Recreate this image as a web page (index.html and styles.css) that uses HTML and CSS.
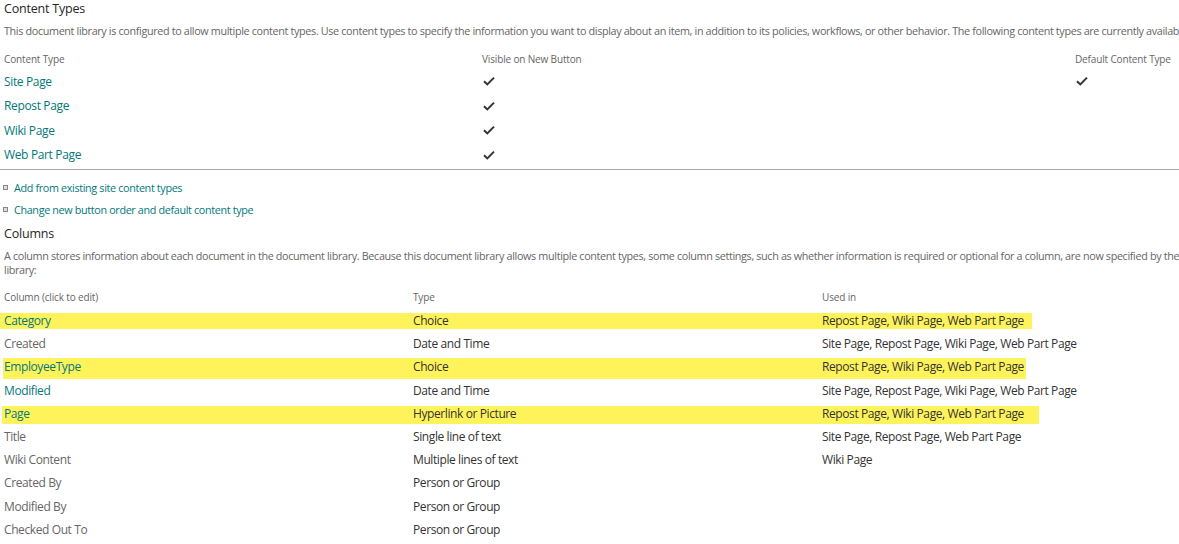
FILE: index.html
```html
<!DOCTYPE html>
<html lang="en">
<head>
    <meta charset="UTF-8">
    <title>Library Settings</title>
    <link rel="stylesheet" href="styles.css">
</head>
<body>
    <div class="page">
        <!-- Content types -->
        <h3 class="section-title">Content Types</h3>
        <p class="section-desc">This document library is configured to allow multiple content types. Use content types to specify the information you want to display about an item, in addition to its policies, workflows, or other behavior. The following content types are currently available in this library:</p>

        <div class="ct-table">
            <div class="ct-row ct-head">
                <span>Content Type</span>
                <span>Visible on New Button</span>
                <span>Default Content Type</span>
            </div>
            <div class="ct-row">
                <a href="#">Site Page</a>
                <span class="check"><svg viewBox="0 0 12 10" width="12" height="10"><path d="M1 5.2 L4.3 8.4 L11 1.6" fill="none" stroke="#333" stroke-width="2"/></svg></span>
                <span class="check"><svg viewBox="0 0 12 10" width="12" height="10"><path d="M1 5.2 L4.3 8.4 L11 1.6" fill="none" stroke="#333" stroke-width="2"/></svg></span>
            </div>
            <div class="ct-row">
                <a href="#">Repost Page</a>
                <span class="check"><svg viewBox="0 0 12 10" width="12" height="10"><path d="M1 5.2 L4.3 8.4 L11 1.6" fill="none" stroke="#333" stroke-width="2"/></svg></span>
                <span></span>
            </div>
            <div class="ct-row">
                <a href="#">Wiki Page</a>
                <span class="check"><svg viewBox="0 0 12 10" width="12" height="10"><path d="M1 5.2 L4.3 8.4 L11 1.6" fill="none" stroke="#333" stroke-width="2"/></svg></span>
                <span></span>
            </div>
            <div class="ct-row">
                <a href="#">Web Part Page</a>
                <span class="check"><svg viewBox="0 0 12 10" width="12" height="10"><path d="M1 5.2 L4.3 8.4 L11 1.6" fill="none" stroke="#333" stroke-width="2"/></svg></span>
                <span></span>
            </div>
        </div>

        <ul class="actions">
            <li><a href="#">Add from existing site content types</a></li>
            <li><a href="#">Change new button order and default content type</a></li>
        </ul>

        <!-- Columns -->
        <h3 class="section-title">Columns</h3>
        <p class="section-desc wrap">A column stores information about each document in the document library. Because this document library allows multiple content types, some column settings, such as whether information is required or optional for a column, are now specified by the content type of the item. The following columns are currently available in this document library:</p>

        <div class="col-table">
            <div class="col-row col-head">
                <span>Column (click to edit)</span>
                <span>Type</span>
                <span>Used in</span>
            </div>
            <div class="col-row mark mark-1">
                <a href="#">Category</a>
                <span>Choice</span>
                <span>Repost Page, Wiki Page, Web Part Page</span>
            </div>
            <div class="col-row">
                <a href="#" class="muted">Created</a>
                <span>Date and Time</span>
                <span>Site Page, Repost Page, Wiki Page, Web Part Page</span>
            </div>
            <div class="col-row mark mark-2">
                <a href="#">EmployeeType</a>
                <span>Choice</span>
                <span>Repost Page, Wiki Page, Web Part Page</span>
            </div>
            <div class="col-row">
                <a href="#">Modified</a>
                <span>Date and Time</span>
                <span>Site Page, Repost Page, Wiki Page, Web Part Page</span>
            </div>
            <div class="col-row mark mark-3">
                <a href="#">Page</a>
                <span>Hyperlink or Picture</span>
                <span>Repost Page, Wiki Page, Web Part Page</span>
            </div>
            <div class="col-row">
                <a href="#" class="muted">Title</a>
                <span>Single line of text</span>
                <span>Site Page, Repost Page, Web Part Page</span>
            </div>
            <div class="col-row">
                <a href="#" class="muted">Wiki Content</a>
                <span>Multiple lines of text</span>
                <span>Wiki Page</span>
            </div>
            <div class="col-row">
                <a href="#" class="muted">Created By</a>
                <span>Person or Group</span>
                <span></span>
            </div>
            <div class="col-row">
                <a href="#" class="muted">Modified By</a>
                <span>Person or Group</span>
                <span></span>
            </div>
            <div class="col-row">
                <a href="#" class="muted">Checked Out To</a>
                <span>Person or Group</span>
                <span></span>
            </div>
        </div>
    </div>
</body>
</html>
```

FILE: styles.css
```css
html, body {
    margin: 0;
    padding: 0;
    background: #fff;
    overflow: hidden;
}
body {
    font-family: "Open Sans", "Noto Sans", sans-serif;
    color: #333;
}
.page {
    width: 1800px;
    padding: 0 0 0 4px;
}
a {
    color: #03787c;
    text-decoration: none;
}
a.muted {
    color: #666;
}
.section-title {
    margin: 0;
    font-size: 12.5px;
    font-weight: normal;
    line-height: 18px;
    letter-spacing: -0.2px;
    color: #262626;
}
.section-desc {
    margin: 6px 0 0;
    font-size: 10.8px;
    line-height: 14px;
    letter-spacing: -0.35px;
    color: #666;
    white-space: nowrap;
}
.section-desc.wrap {
    width: 1615px;
    white-space: normal;
    margin-top: 6px;
}
.ct-table {
    margin-top: 12px;
    margin-left: -4px;
    padding-left: 4px;
    border-bottom: 1px solid #a6a6a6;
    padding-bottom: 2px;
}
.ct-row {
    display: grid;
    grid-template-columns: 478px 593px auto;
    height: 24.5px;
    align-items: center;
    font-size: 12px;
    letter-spacing: -0.35px;
}
.ct-head {
    height: 17px;
    font-size: 10px;
    letter-spacing: -0.15px;
    color: #666;
    margin-bottom: 2px;
}
.check {
    display: flex;
    align-items: center;
    padding-left: 1px;
}
.actions {
    list-style: none;
    margin: 7px 0 0;
    padding: 0;
    font-size: 10.8px;
    letter-spacing: -0.35px;
}
.actions li {
    position: relative;
    height: 22px;
    line-height: 22px;
    padding-left: 10px;
}
.actions li::before {
    content: "";
    position: absolute;
    left: -1px;
    top: 8px;
    width: 3px;
    height: 3px;
    border: 1px solid #888;
    background: #ddd;
}
.actions + .section-title {
    margin-top: 4px;
}
.col-table {
    margin-top: 10px;
}
.col-row {
    position: relative;
    display: grid;
    grid-template-columns: 409px 409px auto;
    height: 23.2px;
    align-items: center;
    font-size: 12px;
    letter-spacing: -0.4px;
}
.col-row > * {
    position: relative;
}
.col-head {
    height: 20px;
    font-size: 10px;
    letter-spacing: -0.15px;
    color: #666;
    margin-bottom: 2px;
}
.mark::before {
    content: "";
    position: absolute;
    background: #fff35c;
}
.mark-1::before {
    left: -4px;
    width: 1032px;
    top: 4px;
    height: 16px;
}
.mark-2::before {
    left: -1px;
    width: 1023px;
    top: 3px;
    height: 21px;
}
.mark-3::before {
    left: -2px;
    width: 1037px;
    top: 4px;
    height: 18px;
}
```
